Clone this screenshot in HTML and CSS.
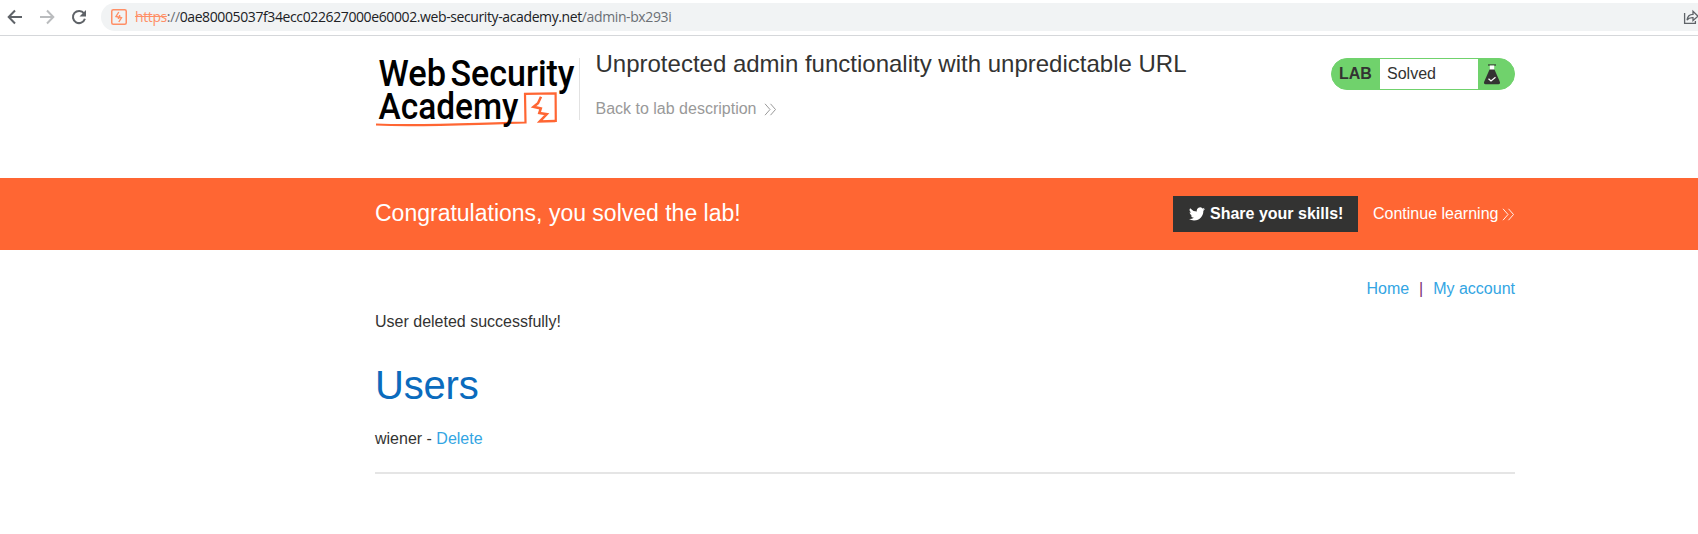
FILE: index.html
```html
<!DOCTYPE html>
<html lang="en">
<head>
<meta charset="utf-8">
<title>Unprotected admin functionality with unpredictable URL</title>
<link rel="stylesheet" href="styles.css">
</head>
<body>
<div class="toolbar">
  <svg class="nav-icons" width="101" height="35" viewBox="0 0 101 35" fill="none" stroke-width="2">
    <path d="M22 17H9M15 10.500L8.700 17l6.300 6.500" stroke="#5f6368"/>
    <path d="M40 17h13M47 10.500l6.300 6.500-6.300 6.500" stroke="#babcbe"/>
    <path d="M84 13.400a6.100 6.100 0 1 0 .9 5.400" stroke="#5f6368"/>
    <path d="M86 10v6.500h-6.500z" fill="#5f6368"/>
  </svg>
  <div class="address">
    <svg class="site-icon" width="16" height="16" viewBox="0 0 16 16" fill="none" stroke="#ff8f66">
      <rect x=".75" y=".75" width="14.500" height="14.500" rx="1.500" stroke-width="1.500"/>
      <path d="M7.800 3L5 7.500l5.500 1.200L7.800 13M7.500 8v2M8.600 6v2" stroke-width="1.400"/>
    </svg>
    <span class="url"><s>https</s><span class="dim">://</span>0ae80005037f34ecc022627000e60002.web-security-academy.net<span class="dim">/admin-bx293i</span></span>
    <svg class="share" width="15" height="16" viewBox="0 0 15 16" fill="none" stroke="#5f6368" stroke-width="1.300">
      <path d="M1.600 4v10.400h10.800V12"/>
      <path d="M4 11c.6-4 2.600-5.500 6-5.600V2.200l5 5-5 4.300V8.600C7.500 8.400 5.500 9 4 11z"/>
    </svg>
  </div>
</div>
<header class="header container">
  <svg class="logo" width="204" height="84" viewBox="0 0 204 84">
    <g fill="none" stroke="#ff6633" stroke-width="2.200">
      <path d="M1 75.500c44 2 86-.5 149.500-2L150 44.800l30.600-.5.2 28.700"/>
      <path d="M166 47.700l-3 6.500-4.500 3.600 7.300 1.700-1.500 4.500 7.500 1.200-7 7.300 15.500-.5" stroke-width="2.500"/>
    </g>
    <g class="logo-text">
      <text x="3.500" y="37" textLength="67.500" lengthAdjust="spacingAndGlyphs">Web</text>
      <text x="75.500" y="37" textLength="124" lengthAdjust="spacingAndGlyphs">Security</text>
      <text x="3.500" y="70" textLength="140" lengthAdjust="spacingAndGlyphs">Academy</text>
    </g>
  </svg>
  <div class="heading">
    <h2>Unprotected admin functionality with unpredictable URL</h2>
    <a class="back">Back to lab description
      <svg width="13" height="13" viewBox="0 0 13 13" fill="none" stroke="#999"><path d="M1 .8l5 5.700-5 5.700M6.500.8l5 5.700-5 5.700"/></svg>
    </a>
  </div>
  <div class="badge">
    <b>LAB</b><span class="status">Solved</span>
    <svg width="18" height="22" viewBox="0 0 18 22">
      <path d="M5 1h8" stroke="#333332" stroke-width="1.200"/>
      <path d="M6.800 1.500h4.400V6H6.800z" fill="#fff"/>
      <path d="M6.500 5.500h5l5.300 12.300c.6 1.500 0 2.400-1.300 2.400H2.500c-1.300 0-1.900-.9-1.300-2.400z" fill="#333332"/>
      <path d="M5.500 14.700l2.500 2.300 4.500-3.800" stroke="#fff" stroke-width="1.200" fill="none"/>
    </svg>
  </div>
</header>
<section class="banner">
  <div class="container banner-row">
    <h4>Congratulations, you solved the lab!</h4>
    <a class="share-button">
      <svg width="16" height="14" viewBox="0 0 24 20" fill="#fff"><path d="M23.950 2.600a10 10 0 0 1-2.800.8A4.900 4.900 0 0 0 23.300.6a9.900 9.900 0 0 1-3.100 1.200 4.900 4.900 0 0 0-8.400 4.500A14 14 0 0 1 1.700 1.200a4.900 4.900 0 0 0 1.500 6.600 4.900 4.900 0 0 1-2.200-.6c0 2.300 1.600 4.400 3.900 4.900a5 5 0 0 1-2.200.1 4.900 4.900 0 0 0 4.600 3.400A9.900 9.900 0 0 1 0 17.600a14 14 0 0 0 7.500 2.200c9.100 0 14-7.500 14-14v-.6a10 10 0 0 0 2.450-2.600z"/></svg>
      <span>Share your skills!</span>
    </a>
    <a class="continue">Continue learning
      <svg width="13" height="13" viewBox="0 0 13 13" fill="none" stroke="#fff" stroke-width=".9"><path d="M1 .8l5 5.700-5 5.700M6.500.8l5 5.700-5 5.700"/></svg>
    </a>
  </div>
</section>
<main class="container">
  <nav class="links"><a>Home</a><span class="pipe">|</span><a>My account</a></nav>
  <p class="message">User deleted successfully!</p>
  <h1>Users</h1>
  <p class="user">wiener - <a>Delete</a></p>
  <hr>
</main>
</body>
</html>
```
FILE: styles.css
```css
* { box-sizing: border-box; }
body {
  margin: 0;
  background: #fff;
  color: #333332;
  font: 16px/20px "Liberation Sans", Arial, sans-serif;
  overflow: hidden;
}
h1, h2, h4, p { margin: 0; font-weight: 400; }
.container { width: 1140px; margin-left: 375px; }
.toolbar {
  display: flex;
  height: 36px;
  border-bottom: 1px solid #d5d7da;
}
.nav-icons { flex: none; }
.address {
  display: flex;
  align-items: center;
  flex: 1;
  height: 28px;
  margin-top: 3px;
  padding-left: 10px;
  border-radius: 14px 0 0 14px;
  background: #f1f3f4;
}
.url {
  margin-left: 8px;
  color: #202124;
  font: 14px/20px "Open Sans", "Noto Sans", sans-serif;
  letter-spacing: -0.39px;
  white-space: nowrap;
}
.url s { color: #ff8f66; }
.dim { color: #6b6f74; }
.share { margin-left: auto; }
.header { display: flex; height: 142px; }
.logo { flex: none; margin-top: 13px; }
.logo-text { font: 500 36.5px Roboto, sans-serif; fill: #000; }
.heading {
  height: 62px;
  margin-top: 22px;
  padding-left: 15.5px;
  border-left: 1px solid #e2e2e2;
}
.heading h2 {
  margin-top: -10px;
  font-size: 24px;
  line-height: 32px;
  white-space: nowrap;
}
.back {
  display: flex;
  align-items: center;
  gap: 8px;
  margin-top: 19px;
  color: #999;
}
.badge {
  display: flex;
  width: 184px;
  height: 32px;
  margin: 22px 0 0 auto;
  border: 1px solid #70d26c;
  border-radius: 16px;
  background: #70d26c;
  line-height: 30px;
}
.badge b { width: 48px; padding-left: 7px; }
.status { width: 98px; padding-left: 7px; background: #fff; }
.badge svg { margin: 5px 0 0 5px; }
.banner { height: 72px; background: #ff6633; color: #fff; }
.banner-row { display: flex; align-items: center; height: 72px; }
.banner h4 { margin-bottom: 2px; font-size: 23px; line-height: 28px; }
.share-button {
  display: flex;
  align-items: center;
  gap: 5px;
  width: 185px;
  height: 36px;
  margin-left: auto;
  padding-left: 16px;
  background: #333332;
  font-weight: 700;
}
.continue {
  display: flex;
  align-items: center;
  justify-content: space-between;
  width: 142px;
  margin-left: 15px;
  white-space: nowrap;
}
.links {
  display: flex;
  justify-content: flex-end;
  padding-top: 29px;
}
a { color: #33a5e3; }
.share-button, .continue { color: #fff; }
.pipe { width: 24px; text-align: center; color: #7c2c72; }
.message { margin-top: 13px; }
h1 { margin-top: 29px; color: #0b6bbd; font-size: 40px; line-height: 48px; letter-spacing: -0.2px; }
.user { margin-top: 20px; }
hr { height: 2px; margin: 23px 0 0; border: 0; background: #e5e5e5; }
```
